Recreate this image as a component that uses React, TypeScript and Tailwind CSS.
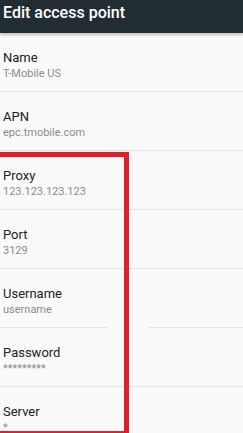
const fields = [
  { label: "Name", value: "T-Mobile US" },
  { label: "APN", value: "epc.tmobile.com" },
  { label: "Proxy", value: "123.123.123.123" },
  { label: "Port", value: "3129" },
  { label: "Username", value: "username" },
  { label: "Password", value: "*********" },
  { label: "Server", value: "*" },
];

const App = () => {
  return (
    <div className="relative w-[243px] h-[433px] overflow-hidden bg-[#fafafa] font-['Roboto',sans-serif]">
      <div className="relative z-10 h-[33px] bg-[#222d31] px-[3px] pt-[5px] shadow-[0_2px_3px_rgba(0,0,0,0.25)]">
        <h1 className="text-[16px] font-medium text-white leading-none">Edit access point</h1>
      </div>

      <div className="flex flex-col">
        {fields.map((field, i) => (
          <div key={field.label}>
            <div className="h-[58px] px-[3px] pt-[16px]">
              <div className="text-[13px] leading-[17px] text-[#212121]">{field.label}</div>
              <div className="text-[11px] leading-[15px] text-[#8c8c8c]">{field.value}</div>
            </div>
            {i < fields.length - 1 &&
              (field.label === "Username" ? (
                <div className="flex h-px">
                  <div className="w-[107px] bg-[#e3e3e3]" />
                  <div className="w-[41px]" />
                  <div className="flex-1 bg-[#e3e3e3]" />
                </div>
              ) : (
                <div className="h-px bg-[#e3e3e3]" />
              ))}
          </div>
        ))}
      </div>

      {/* highlight box */}
      <div className="absolute left-[-6px] top-[152px] w-[135px] h-[284px] border-[5px] border-[#e01f2b]" />
    </div>
  );
};

export default App;
